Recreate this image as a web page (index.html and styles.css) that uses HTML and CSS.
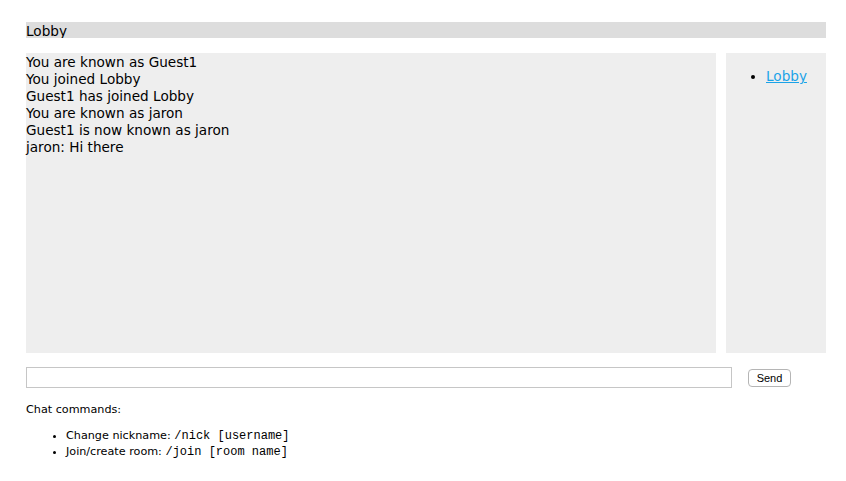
FILE: index.html
```html
<!DOCTYPE html>
<html>
<head>
<meta charset="utf-8">
<title>Chat</title>
<link rel="stylesheet" href="styles.css">
</head>
<body>
<div class="content">
  <div class="room">Lobby</div>
  <div class="main">
    <div class="messages">
      <div>You are known as Guest1</div>
      <div>You joined Lobby</div>
      <div>Guest1 has joined Lobby</div>
      <div>You are known as jaron</div>
      <div>Guest1 is now known as jaron</div>
      <div>jaron: Hi there</div>
    </div>
    <div class="room-list">
      <ul>
        <li><a href="#">Lobby</a></li>
      </ul>
    </div>
  </div>
  <form class="send-form">
    <input class="send-message" type="text">
    <button class="send-button" type="button">Send</button>
  </form>
  <div class="help">
    <p class="help-title">Chat commands:</p>
    <ul class="help-list">
      <li>Change nickname: <code>/nick [username]</code></li>
      <li>Join/create room: <code>/join [room name]</code></li>
    </ul>
  </div>
</div>
</body>
</html>
```

FILE: styles.css
```css
html, body {
  margin: 0;
  background: #fff;
}
body {
  padding: 22px 0 0 26px;
  font-family: "DejaVu Sans", Verdana, sans-serif;
  font-size: 13.6px;
  color: #000;
}
.content {
  width: 800px;
}
.room {
  background: #dddddd;
  height: 16px;
  line-height: 18px;
  margin-bottom: 15px;
  overflow: hidden;
}
.main {
  display: flex;
  gap: 10px;
  height: 300px;
}
.messages {
  box-sizing: border-box;
  width: 690px;
  height: 300px;
  padding-top: 1px;
  background: #eeeeee;
  line-height: 17px;
}
.room-list {
  width: 100px;
  height: 300px;
  background: #eeeeee;
}
.room-list ul {
  margin: 15px 0 0 0;
  padding-left: 40px;
  line-height: 17px;
}
.room-list a {
  color: #1aa3e8;
}
.send-form {
  display: flex;
  align-items: center;
  margin: 14px 0 0 0;
  height: 21px;
}
.send-message {
  box-sizing: border-box;
  width: 706px;
  height: 21px;
  margin: 0;
  border: 1px solid #c6c6c6;
  padding: 0 2px;
}
.send-button {
  margin-left: 16px;
  box-sizing: border-box;
  width: 43px;
  height: 18px;
  padding: 0;
  font-family: "Liberation Sans", Arial, sans-serif;
  font-size: 11px;
  background: #fff;
  border: 1px solid #b5b5b5;
  border-radius: 4px;
  color: #000;
}
.help {
  font-size: 11.2px;
}
.help-title {
  margin: 14px 0 0 0;
  line-height: 15px;
}
.help-list {
  margin: 11px 0 0 0;
  padding-left: 40px;
  line-height: 15px;
}
.help-list code {
  font-family: "Liberation Mono", "Courier New", monospace;
  font-size: 12px;
}
```
